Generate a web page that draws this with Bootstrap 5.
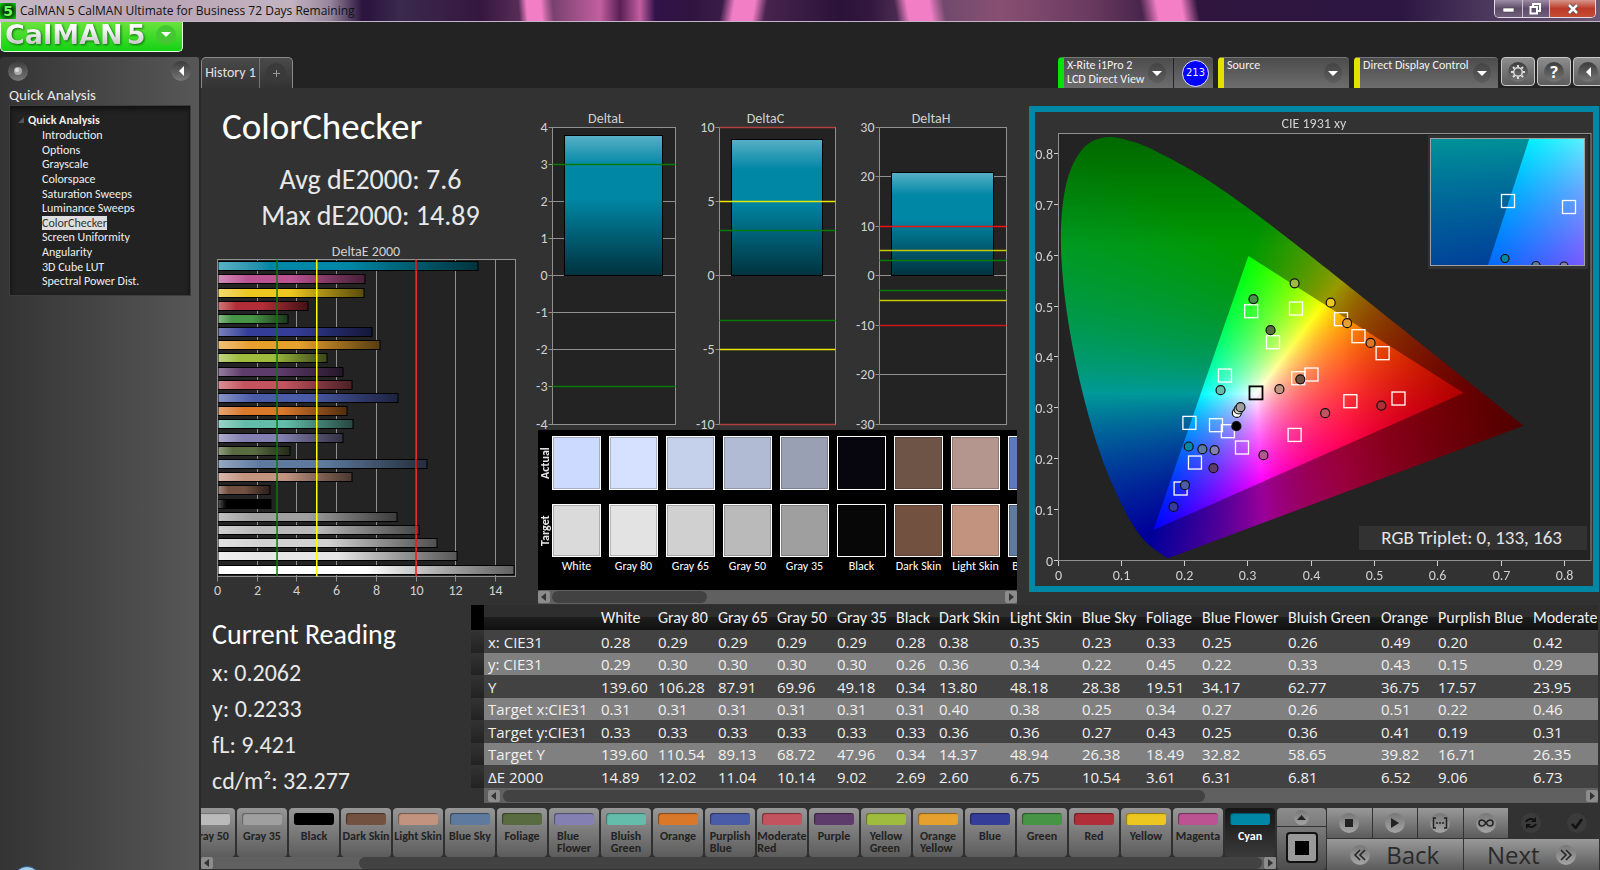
<!DOCTYPE html>
<html lang="en" data-bs-theme="dark">
<head>
<meta charset="utf-8">
<meta name="viewport" content="width=device-width, initial-scale=1">
<title>CalMAN 5 CalMAN Ultimate for Business 72 Days Remaining</title>
<link href="https://cdn.jsdelivr.net/npm/bootstrap@5.3.0/dist/css/bootstrap.min.css" rel="stylesheet">
<style>
  :root { --ui: Carlito, Lato, sans-serif; --num: "Open Sans", "Noto Sans", sans-serif; --cyan: #0087a5; }
  body { font-family: var(--ui); font-size: 13px; line-height: 14px; color: #e8e8e8; background: #232323; overflow-x: hidden; }
  button { font-family: inherit; }
  svg { display: block; }

  /* window frame */
  .titlebar { height: 22px; color: #111; border-bottom: 1px solid #c4b4c8; font: 12px/20px var(--num); overflow: hidden;
    background:
      linear-gradient(90deg, #c8bac6 0, #b9a3b4 150px, #c3b4c0 290px, #b3a2b4cc 330px, transparent 362px),
      linear-gradient(80deg, transparent 1126px, #f57fc6 1142px 1166px, transparent 1182px),
      linear-gradient(100deg, transparent 712px, #f27fc6 724px 744px, transparent 756px),
      linear-gradient(80deg, transparent 884px, #f27fc6 896px 918px, transparent 932px),
      linear-gradient(85deg, transparent 518px, #f27fc6 526px 540px, transparent 552px),
      linear-gradient(90deg, #2c1640 0, #2c1640 370px, #3b2a4d 400px, #35163f 480px, #6d3c67 545px, #c25f9f 600px, #5a1f55 620px, #c25f9f 640px, #32124a 655px, #2f1440 690px, #4a2550 760px, #2a1238 840px, #33173f 870px, #70496c 940px, #885072 1000px, #6a3a60 1090px, #30163e 1180px, #2c1642 1400px, #49365a 1480px, #6a5874 1600px); }
  .app-mark { width: 16px; height: 16px; background: radial-gradient(#0a3a08 40%, #11e011); color: #6dff5a; font: bold 14px/16px "DejaVu Sans", sans-serif; text-align: center; }
  .win-ctl { border: 1px solid #e2dce6; border-top: 0; border-radius: 0 0 5px 5px; height: 18px; overflow: hidden; }
  .win-ctl button { border: 0; height: 17px; width: 27px; background: linear-gradient(#9c8da4, #5e4c69 50%, #6f5f7b); }
  .win-ctl button + button { border-left: 1px solid #cbc2d0; }
  .win-ctl .win-close { width: 46px; background: linear-gradient(#d6968c, #bb3b28 50%, #c64c34); }

  .logo-btn { width: 183px; height: 30px; border: 1px solid #e6ffe0; border-top: 0; border-radius: 0 0 5px 5px; background: linear-gradient(#6be33c, #13d213); padding: 0 6px 4px 4px; }
  .logo-word { font: bold 27px/26px "DejaVu Sans", sans-serif; background: linear-gradient(#fff 20%, #c9c9c9 85%); -webkit-background-clip: text; background-clip: text; color: transparent; filter: drop-shadow(1px 1px 1px #0b6a0b); }
  .logo-drop { width: 20px; height: 20px; border-radius: 50%; background: #45c732; }

  /* workspace */
  .round-btn { width: 20px; height: 20px; border-radius: 50%; border: 0; padding: 0; background: linear-gradient(#3c3c3c, #777); display: flex; align-items: center; justify-content: center; }
  .side { width: 201px; flex: none; background: linear-gradient(90deg, #343434, #575757); border-right: 2px solid #2a2a2a; border-radius: 4px 4px 0 0; overflow: hidden; position: relative; }
  .side-title { font-size: 15px; line-height: 18px; padding: 5px 0 1px 9px; }
  .tree { background: #222; border: 1px solid #3c3c3c; box-shadow: inset 0 3px 5px #111; margin: 0 8px 0 9px; padding: 7px 0 4px; height: 191px; }
  .tree ul { height: 161px; display: grid; grid-auto-rows: 1fr; margin: 1px 0 0; padding: 0 0 0 32px; list-style: none; }
  .tree a { color: #eee; text-decoration: none; font-size: 12px; }
  .tree a.current { background: #dedede; color: #333; }
  .orb { position: absolute; left: 14px; bottom: -20px; width: 26px; height: 24px; border-radius: 50%; background: #a8cbe8; border: 1px solid #2b5c86; }

  .tab-box { height: 31px; border: 1px solid #8a8a8a; border-bottom: 0; border-radius: 5px 5px 0 0; background: linear-gradient(#4a4a4a, #333); }
  .tab-box > button { background: none; border: 0; color: #e0e0e0; padding: 0; font-size: 14px; white-space: nowrap; }
  .meter { height: 31px; color: #f2f2f2; background: linear-gradient(#4c4c4c, #6d6d6d); border-top: 1px solid #777; border-radius: 4px 4px 0 0; overflow: hidden; display: flex; align-items: stretch; border-left: 6px solid #e6e000; }
  .meter.ready { border-left-color: #07e207; }
  .meter button { flex: 1; background: none; border: 0; color: inherit; text-align: left; padding: 0 7px 0 3px; display: flex; justify-content: space-between; }
  .meter button > span:first-child { white-space: nowrap; font-size: 12px; }
  .drop { width: 18px; height: 20px; margin-top: 5px; border-radius: 50%; background: linear-gradient(#444, #5d5d5d); display: flex; align-items: center; justify-content: center; flex: none; }
  .count-chip { width: 27px; height: 27px; border-radius: 50%; background: #00f; border: 1px solid #dfe6ff; font: 10px/24px "DejaVu Sans", sans-serif; text-align: center; }
  .tool-btn { width: 34px; height: 29px; border: 1px solid #c9c9c9; border-radius: 4px; background: linear-gradient(#8d8d8d, #5c5c5c); padding: 0; display: flex; align-items: center; justify-content: center; flex: none; }

  .board { background: #323232; }
  .big-title { font-size: 37px; line-height: 46px; padding: 16px 0 0 21px; font-weight: 400; margin: 0; }
  .stat { font-size: 28px; line-height: 36px; padding: 12px 0 6px 6px; }
  .col-stats { width: 333px; flex: none; }
  .col-delta { width: 487px; flex: none; padding-top: 20px; }
  .cie { border: 6px solid var(--cyan); margin: 18px 1px 0 8px; position: relative; }
  .cie canvas { position: absolute; inset: 0; width: 100%; height: 100%; }
  .cie svg { position: relative; width: 100%; height: auto; }
  svg text { font-family: var(--ui); fill: #d0d0d0; }

  .swatches { background: #000; height: 160px; margin: 0 4px; padding-top: 6px; overflow: hidden; display: grid; grid-template-columns: 14px 1fr; }
  .swatches .lane { display: flex; gap: 8px; overflow: hidden; }
  .swatches figure { margin: 0; width: 49px; flex: none; text-align: center; color: #fff; font-size: 12px; }
  .chip { height: 54px; border: 1px solid #fff; box-shadow: inset 0 0 0 1px #0003; margin-bottom: 14px; }
  .chip + .chip { height: 53px; margin-bottom: 2px; }
  .swatches figcaption { white-space: nowrap; margin: 0 -4px; }
  .vert { writing-mode: vertical-rl; transform: rotate(180deg); font-weight: 700; font-size: 12px; height: 54px; margin-bottom: 14px; text-align: center; width: 14px; }

  .sbar { height: 14px; background: #606060; display: flex; align-items: center; }
  .sbar button { width: 12px; height: 12px; padding: 0; border: 0; border-radius: 2px; background: #8c8c8c; display: flex; align-items: center; justify-content: center; flex: none; }
  .sbar i { height: 12px; border-radius: 6px; background: #424242; flex: none; }

  .reading { width: 270px; flex: none; padding: 12px 0 0 11px; font-size: 24px; line-height: 36px; }
  .reading h2 { font-size: 28px; line-height: 36px; margin: 0 0 2px; font-weight: 400; }
  .grid-wrap { overflow: hidden; margin-right: 2px; min-width: 0; flex: 1; }
  .readings { table-layout: fixed; border-collapse: collapse; width: 1178px; font: 15px/22px var(--num); color: #f0f0f0; }
  .readings th, .readings td { padding: 0 0 0 4px; white-space: nowrap; font-weight: 400; text-align: left; overflow: hidden; }
  .readings thead tr { height: 25px; background: linear-gradient(#2e2e2e 50%, #1c1c1c 50%, #111); font-family: var(--ui); font-size: 16px; }
  .readings thead th:first-child { background: #000; }
  .readings tbody tr { height: 23px; background: #424242; }
  .readings tbody tr:nth-child(even) { background: #808080; height: 22px; }
  .readings tbody th:first-child { background: linear-gradient(#333, #222); }

  .patches { display: flex; justify-content: flex-end; gap: 2px; height: 49px; overflow: hidden; padding-right: 1px; background: #303030; }
  .patch { width: 50px; flex: none; border: 0; border-radius: 4px; padding: 5px 0 0; background: linear-gradient(#979797, #5c5c5c); color: #222; font-size: 12px; line-height: 12px; font-weight: 700; display: flex; flex-direction: column; align-items: center; gap: 5px; }
  .patch span { height: 12px; width: 40px; border-radius: 3px; box-shadow: inset 1px 1px 1px #0006; flex: none; }
  .patch b { text-align: left; }
  .patch.on { background: linear-gradient(#161616, #3a3a3a); color: #fff; }
  .stopcol { width: 49px; flex: none; border-radius: 4px; overflow: hidden; background: linear-gradient(#8d8d8d, #4c4c4c); display: flex; flex-direction: column; align-items: center; }
  .stopcol .up { width: 100%; height: 19px; border: 0; border-bottom: 1px solid #333; background: none; padding: 0; display: flex; align-items: center; justify-content: center; }
  .stopcol .stop { width: 32px; height: 31px; margin-top: 5px; border: 2px solid #111; border-radius: 4px; background: #999; padding: 0; display: flex; align-items: center; justify-content: center; }
  .pad { width: 272px; flex: none; display: grid; grid-template-columns: repeat(6, 1fr); grid-template-rows: 30px 31px; column-gap: 1px; row-gap: 1px; margin-right: 1px; }
  .pad button { border: 0; padding: 0; background: linear-gradient(#999, #5b5b5b); color: #2a2a2a; display: flex; align-items: center; justify-content: center; }
  .pad .off { background: #323232; }
  .pad .nav-step { grid-column: span 3; font: 24px/28px var(--num); gap: 16px; -webkit-text-stroke: 0; }
  .disc { width: 20px; height: 20px; border-radius: 50%; background: linear-gradient(#777, #a5a5a5); display: flex; align-items: center; justify-content: center; flex: none; }
  .off .disc { background: #3b3b3b; }
</style>
</head>
<body>
<div class="d-flex flex-column min-vh-100">
  <header class="titlebar d-flex justify-content-between">
    <div class="d-flex align-items-center gap-1"><span class="app-mark">5</span><span>CalMAN 5 CalMAN Ultimate for Business 72 Days Remaining</span></div>
    <div class="win-ctl d-flex me-1">
      <button aria-label="Minimize"><svg width="12" height="12" class="mx-auto"><rect x="0" y="5" width="11" height="4" fill="#fff" stroke="#444" stroke-width=".6"/></svg></button>
      <button aria-label="Restore"><svg width="12" height="12" viewBox="0 0 12 12"><path d="M4 3V1h7v7H9M1.500 4h6.500v6.500H1.500z" fill="none" stroke="#fff" stroke-width="2"/></svg></button>
      <button class="win-close" aria-label="Close"><svg width="12" height="12" viewBox="0 0 12 12" class="mx-auto"><path d="M2 2l8 8M10 2l-8 8" stroke="#444" stroke-width="4"/><path d="M2 2l8 8M10 2l-8 8" stroke="#fff" stroke-width="2.600"/></svg></button>
    </div>
  </header>

  <div style="height:35px">
    <button class="logo-btn d-flex align-items-center justify-content-between" aria-label="CalMAN 5 menu">
      <span class="logo-word">CalMAN<span class="ms-1">5</span></span>
      <span class="logo-drop d-flex align-items-center justify-content-center"><svg width="10" height="5"><path d="M0 0h10L5 5z" fill="#fff"/></svg></span>
    </button>
  </div>

  <div class="d-flex flex-grow-1">
    <aside class="side">
      <div class="d-flex justify-content-between px-2 pt-1">
        <button class="round-btn" aria-label="Record"><svg width="10" height="10"><circle cx="5" cy="5" r="4" fill="#aaa"/><circle cx="4" cy="4" r="2" fill="#ddd"/></svg></button>
        <button class="round-btn" aria-label="Collapse"><svg width="6" height="10"><path d="M6 0v10L1 5z" fill="#fff"/></svg></button>
      </div>
      <div class="side-title">Quick Analysis</div>
      <nav class="tree">
        <div class="d-flex align-items-center ps-2 gap-1"><svg width="6" height="6" ><path d="M6 0v6H0z" fill="#555"/></svg><a href="#" class="fw-bold">Quick Analysis</a></div>
        <ul id="tree"></ul>
      </nav>
      <div class="orb"></div>
    </aside>

    <main class="flex-grow-1 d-flex flex-column" style="min-width:0">
      <div class="d-flex justify-content-between overflow-hidden">
        <div class="tab-box d-flex">
          <button style="width:57px">History 1</button>
          <button class="border-start border-secondary d-flex align-items-center justify-content-center" style="width:33px" aria-label="Add tab"><span class="round-btn" style="background:#3a3a3a"><svg width="7" height="7"><path d="M3.500 0v7M0 3.500h7" stroke="#999"/></svg></span></button>
        </div>
        <div class="d-flex" style="margin-right:-7px">
          <div class="meter ready" style="width:155px;margin-right:5px">
            <button><span>X-Rite i1Pro 2<br>LCD Direct View</span><span class="drop"><svg width="10" height="5"><path d="M0 0h10L5 5z" fill="#fff"/></svg></span></button>
            <div class="border-start border-dark d-flex align-items-center px-1 ps-2"><span class="count-chip">213</span></div>
          </div>
          <div class="meter" style="width:131px;margin-right:5px"><button><span>Source</span><span class="drop"><svg width="10" height="5"><path d="M0 0h10L5 5z" fill="#fff"/></svg></span></button></div>
          <div class="meter" style="width:144px;margin-right:3px"><button><span>Direct Display Control</span><span class="drop"><svg width="10" height="5"><path d="M0 0h10L5 5z" fill="#fff"/></svg></span></button></div>
          <div class="d-flex" style="gap:2px">
            <button class="tool-btn" aria-label="Settings"><span class="round-btn"><svg width="16" height="16" viewBox="-8 -8 16 16"><circle r="4.300" fill="none" stroke="#ddd" stroke-width="1.500"/><g stroke="#ddd" stroke-width="2"><path d="M0-7v2M0 5v2M-7 0h2M5 0h2M-5-5l1.500 1.500M5 5L3.500 3.500M5-5L3.500-3.500M-5 5l1.500-1.500"/></g></svg></span></button>
            <button class="tool-btn" aria-label="Help"><span class="round-btn text-white fw-bold fs-6" style="font-family:'Open Sans'">?</span></button>
            <button class="tool-btn pe-1" aria-label="Collapse toolbar"><span class="round-btn"><svg width="6" height="10"><path d="M6 0v10L1 5z" fill="#fff"/></svg></span></button>
          </div>
        </div>
      </div>

      <div class="board flex-grow-1 d-flex flex-column">
        <div class="d-flex" style="height:517px">
          <section class="col-stats">
            <h1 class="big-title">ColorChecker</h1>
            <div class="stat text-center">Avg dE2000: 7.6<br>Max dE2000: 14.89</div>
            <svg id="de" width="333" height="360"></svg>
          </section>
          <section class="col-delta">
            <div class="d-flex" id="deltas"></div>
            <div class="swatches">
              <div><div class="vert">Actual</div><div class="vert">Target</div></div>
              <div class="lane" id="lane"></div>
            </div>
            <div class="sbar mx-1"><button aria-label="Left"><svg width="6" height="8"><path d="M5 0v8L0 4z" fill="#333"/></svg></button><i style="width:155px;margin-left:2px"></i><button class="ms-auto" aria-label="Right"><svg width="6" height="8"><path d="M1 0v8l5-4z" fill="#333"/></svg></button></div>
          </section>
          <section class="flex-grow-1" style="min-width:0"><div class="cie"><canvas id="field" width="558" height="474"></canvas><svg id="cie" viewBox="0 0 558 474"></svg></div></section>
        </div>

        <div class="d-flex">
          <section class="reading">
            <h2>Current Reading</h2>
            <div>x: 0.2062</div><div>y: 0.2233</div><div>fL: 9.421</div><div>cd/m²: 32.277</div>
          </section>
          <div class="grid-wrap">
            <table class="readings"><colgroup id="cols"></colgroup><thead id="thead"></thead><tbody id="tbody"></tbody></table>
            <div class="sbar" style="height:15px;margin-left:13px"><button class="ms-1" aria-label="Left"><svg width="6" height="8"><path d="M5 0v8L0 4z" fill="#333"/></svg></button><i style="width:63%;margin-left:3px"></i><button class="ms-auto" aria-label="Right"><svg width="6" height="8"><path d="M1 0v8l5-4z" fill="#333"/></svg></button></div>
          </div>
        </div>

        <footer class="d-flex mt-auto" style="height:62px;gap:1px">
          <div class="flex-grow-1" style="min-width:0">
            <div class="patches" id="patches"></div>
            <div class="sbar" style="height:12px"><button class="ms-0" aria-label="Left"><svg width="6" height="8"><path d="M5 0v8L0 4z" fill="#333"/></svg></button><i class="ms-auto" style="width:84%;margin-right:2px"></i><button aria-label="Right"><svg width="6" height="8"><path d="M1 0v8l5-4z" fill="#333"/></svg></button></div>
          </div>
          <div class="stopcol">
            <button class="up" aria-label="Expand"><span class="disc" style="width:15px;height:15px"><svg width="9" height="5"><path d="M0 5h9L4.500 0z" fill="#222"/></svg></span></button>
            <button class="stop" aria-label="Stop all"><svg width="14" height="14"><rect width="14" height="14"/></svg></button>
          </div>
          <div class="pad">
            <button aria-label="Stop"><span class="disc"><svg width="8" height="8"><rect width="8" height="8" fill="#222"/></svg></span></button>
            <button aria-label="Play"><span class="disc"><svg width="9" height="10"><path d="M1 0l8 5-8 5z" fill="#222"/></svg></span></button>
            <button aria-label="Series"><span class="disc"><svg width="16" height="12" viewBox="0 0 16 12"><path d="M4 1H1.500v10H4M12 1h2.500v10H12" fill="none" stroke="#222" stroke-width="1.500"/><path d="M4 6h8" stroke="#222" stroke-width="1.600" stroke-dasharray="2 1"/></svg></span></button>
            <button aria-label="Continuous"><span class="disc"><svg width="16" height="8" viewBox="0 0 16 8"><path d="M8 4C6 1 5 1 4 1a3 3 0 000 6c1 0 2 0 4-3s3-3 4-3a3 3 0 010 6c-1 0-2 0-4-3z" fill="none" stroke="#222" stroke-width="1.500"/></svg></span></button>
            <button class="off" aria-label="Refresh"><span class="disc"><svg width="14" height="14" viewBox="0 0 14 14"><path d="M2 6a5 4 0 018-2M12 8a5 4 0 01-8 2" fill="none" stroke="#111" stroke-width="2"/><path d="M12 1v5H7zM2 13V8h5z" fill="#111"/></svg></span></button>
            <button class="off" aria-label="Accept"><span class="disc"><svg width="12" height="11" viewBox="0 0 12 11"><path d="M1 6l3.500 4L11 1" fill="none" stroke="#111" stroke-width="2.600"/></svg></span></button>
            <button class="nav-step"><span class="disc"><svg width="12" height="12"><path d="M6 1L1 6l5 5M11 1L6 6l5 5" fill="none" stroke="#222" stroke-width="1.500"/></svg></span>Back</button>
            <button class="nav-step">Next<span class="disc"><svg width="12" height="12"><path d="M1 1l5 5-5 5M6 1l5 5-5 5" fill="none" stroke="#222" stroke-width="1.500"/></svg></span></button>
          </div>
        </footer>
      </div>
    </main>
  </div>
</div>

<script src="https://cdn.jsdelivr.net/npm/bootstrap@5.3.0/dist/js/bootstrap.bundle.min.js"></script>
<script>
const $ = id => document.getElementById(id);
const line = (x1, y1, x2, y2, c, w = 1) => `<line x1="${x1}" y1="${y1}" x2="${x2}" y2="${y2}" stroke="${c}" stroke-width="${w}"/>`;
const label = (x, y, t, a = 'middle', s = 14) => `<text x="${x}" y="${y}" text-anchor="${a}" font-size="${s}">${t}</text>`;

$('tree').innerHTML = ['Introduction', 'Options', 'Grayscale', 'Colorspace', 'Saturation Sweeps', 'Luminance Sweeps', 'ColorChecker', 'Screen Uniformity', 'Angularity', '3D Cube LUT', 'Spectral Power Dist.']
  .map(t => `<li><a href="#"${t === 'ColorChecker' ? ' class="current"' : ''}>${t}</a></li>`).join('');

// Patches in measuring order: name, colour, dE 2000
const patches = [['White', '#ffffff', 14.89], ['Gray 80', '#e6e6e6', 12.02], ['Gray 65', '#d2d2d2', 11.04], ['Gray 50', '#bababa', 10.14], ['Gray 35', '#9f9f9f', 9.02], ['Black', '#000000', 2.69], ['Dark Skin', '#735141', 2.6], ['Light Skin', '#c2937f', 6.75], ['Blue Sky', '#5e7b9f', 10.54], ['Foliage', '#596c41', 3.61], ['Blue Flower', '#8480b1', 6.31], ['Bluish Green', '#63bdaa', 6.81], ['Orange', '#d97829', 6.52], ['Purplish Blue', '#4a5ba8', 9.06], ['Moderate Red', '#c2535f', 6.73], ['Purple', '#5d3b6b', 6.31], ['Yellow Green', '#9fbc3f', 5.5], ['Orange Yellow', '#e6a02d', 8.15], ['Blue', '#343d97', 7.78], ['Green', '#479446', 3.55], ['Red', '#b12e38', 4.55], ['Yellow', '#ecc71f', 7.37], ['Magenta', '#bb5393', 7.42], ['Cyan', '#0087a5', 13.1]];

$('patches').innerHTML = patches.slice(3).map(([n, c]) => `<button class="patch${n === 'Cyan' ? ' on' : ''}"><span style="background:${c}"></span><b>${/ (Flower|Green|Blue|Red|Yellow)$/.test(n) ? n.replace(' ', '<br>') : n}</b></button>`).join('');

// DeltaE 2000 bars
(() => {
  const x0 = 16.5, y0 = 19.5, w = 298, h = 317, k = 19.85;
  let s = '<defs>', b = '';
  patches.forEach(([n, c], i) => s += `<linearGradient id="g${i}"><stop offset="0" stop-color="color-mix(in srgb, ${c} 65%, #fff)"/><stop offset=".2" stop-color="${c}"/><stop offset=".5" stop-color="${c}"/><stop offset="1" stop-color="color-mix(in srgb, ${c} 38%, #000)"/></linearGradient>`);
  s += `</defs>` + label(165, 16, 'DeltaE 2000') + `<rect x="${x0}" y="${y0}" width="${w}" height="${h}" fill="#232323" stroke="#909090"/>`;
  for (let v = 0; v <= 14; v += 2) {
    const x = Math.floor(x0 + v * k) + .5;
    s += line(x, y0, x, y0 + h + 5, '#909090') + label(x, 355, v);
  }
  patches.forEach(([n, c, v], i) => {
    const y = Math.round(329.5 - i * 13.19 - 5);
    b += `<rect x="${x0 + .5}" y="${y + .5}" width="${Math.round(v * k)}" height="9" fill="url(#g${i})" stroke="#000"/>`;
  });
  [[3, '#0a7a0a'], [5, '#ffff00'], [10, '#ff1010']].forEach(([v, c]) => b += line(x0 + v * k, y0, x0 + v * k, y0 + h, c, 1.5));
  $('de').innerHTML = s + b + line(x0, y0, x0, y0 + h, '#909090');
})();

// Delta L / C / H columns
const G = '#087a08', Y = '#e8e800', R = '#f01010';
$('deltas').innerHTML = [
  { t: 'DeltaL', W: 156, x: 18.5, w: 123, off: 8, max: 4, step: 1, v: 3.77, lim: [[3, G], [-3, G]] },
  { t: 'DeltaC', W: 160, x: 29.5, w: 116, off: 12, max: 10, step: 5, v: 9.13, lim: [[10, '#b04040'], [5, Y], [3, G], [-3, G], [-5, Y], [-10, '#b04040']] },
  { t: 'DeltaH', W: 171, x: 29.5, w: 127, off: 12, max: 30, step: 10, v: 20.8, lim: [[10, R], [5, '#c8c800'], [3, G], [-3, G], [-5, '#c8c800'], [-10, '#c81818']] }
].map(o => {
  const top = 19.5, h = 297, py = v => Math.round(top + (o.max - v) / (2 * o.max) * h) - .5;
  let s = `<svg width="${o.W}" height="322"><defs><linearGradient id="v${o.t}" x2="0" y2="1"><stop offset="0" stop-color="#58b0c6"/><stop offset=".22" stop-color="#0087a5"/><stop offset=".45" stop-color="#0087a5"/><stop offset="1" stop-color="#00323e"/></linearGradient></defs>`;
  s += label(o.x + o.w / 2 - o.off, 15, o.t) + `<rect x="${o.x}" y="${top}" width="${o.w}" height="${h}" fill="#232323" stroke="#909090"/>`;
  for (let v = -o.max; v <= o.max; v += o.step) s += line(o.x - 4, py(v), o.x + o.w, py(v), '#909090') + label(o.x - 5, py(v) + 4, v, 'end');
  s += `<rect x="${o.x + 12}" y="${py(o.v)}" width="${o.w - 25}" height="${py(0) - py(o.v)}" fill="url(#v${o.t})" stroke="#000"/>`;
  o.lim.forEach(([v, c]) => s += line(o.x, py(v), o.x + o.w, py(v), c, 1.5));
  return s + '</svg>';
}).join('');

// Actual / target swatches
$('lane').innerHTML = [['White', '#cddaff', '#dadada'], ['Gray 80', '#d6e0ff', '#e3e3e3'], ['Gray 65', '#c5d0ea', '#d0d0d0'], ['Gray 50', '#b1bbd4', '#bababa'], ['Gray 35', '#99a0b3', '#9f9f9f'], ['Black', '#07050d', '#070707'], ['Dark Skin', '#6e5447', '#735141'], ['Light Skin', '#b4968e', '#c2937f'], ['Blue Sky', '#5f79c0', '#5e7b9d']]
  .map(([n, a, t]) => `<figure><div class="chip" style="background:${a}"></div><div class="chip" style="background:${t}"></div><figcaption>${n}</figcaption></figure>`).join('');

// Readings table
const widths = [13, 113, 57, 60, 59, 60, 59, 43, 71, 72, 64, 56, 86, 93, 57, 95, 120];
$('cols').innerHTML = widths.map(w => `<col style="width:${w}px">`).join('');
$('thead').innerHTML = '<tr><th></th><th></th>' + patches.slice(0, 15).map(p => `<th>${p[0]}</th>`).join('') + '</tr>';
$('tbody').innerHTML = `x: CIE31|0.28 0.29 0.29 0.29 0.29 0.28 0.38 0.35 0.23 0.33 0.25 0.26 0.49 0.20 0.42
y: CIE31|0.29 0.30 0.30 0.30 0.30 0.26 0.36 0.34 0.22 0.45 0.22 0.33 0.43 0.15 0.29
Y|139.60 106.28 87.91 69.96 49.18 0.34 13.80 48.18 28.38 19.51 34.17 62.77 36.75 17.57 23.95
Target x:CIE31|0.31 0.31 0.31 0.31 0.31 0.31 0.40 0.38 0.25 0.34 0.27 0.26 0.51 0.22 0.46
Target y:CIE31|0.33 0.33 0.33 0.33 0.33 0.33 0.36 0.36 0.27 0.43 0.25 0.36 0.41 0.19 0.31
Target Y|139.60 110.54 89.13 68.72 47.96 0.34 14.37 48.94 26.38 18.49 32.82 58.65 39.82 16.71 26.35
ΔE 2000|14.89 12.02 11.04 10.14 9.02 2.69 2.60 6.75 10.54 3.61 6.31 6.81 6.52 9.06 6.73`
  .split('\n').map(r => { const [h, v] = r.split('|'); return `<tr><th></th><th>${h}</th>${v.split(' ').map(c => `<td>${c}</td>`).join('')}</tr>`; }).join('');

// CIE 1931 xy diagram
(() => {
  const X = x => 23.5 + x * 633, Yy = y => 448.5 - y * 507.6;
  const locus = [[.1741, .005], [.1714, .0051], [.1689, .0069], [.1644, .0109], [.1566, .0177], [.144, .0297], [.1355, .0399], [.1241, .0578], [.1096, .0868], [.0913, .1327], [.0687, .2007], [.0454, .295], [.0235, .4127], [.0082, .5384], [.0039, .6548], [.0139, .7502], [.0389, .812], [.0743, .8338], [.1142, .8262], [.1547, .8059], [.2296, .7543], [.3016, .6923], [.3731, .6245], [.4441, .5547], [.5125, .4866], [.5752, .4242], [.627, .3725], [.6658, .334], [.6915, .3083], [.7347, .2653]];
  const tri = [[.64, .33], [.3, .6], [.15, .06]];
  // linear sRGB, scaled to its strongest channel; dimmed outside the gamut
  const rgb = (x, y, dim) => {
    y = Math.max(y, .002);
    const A = x / y, C = (1 - x - y) / y;
    const c = [3.2406 * A - 1.5372 - .4986 * C, -.9689 * A + 1.8758 + .0415 * C, .0557 * A - .204 + 1.057 * C].map(v => Math.max(v, 0));
    const m = Math.max(...c);
    const k = (dim ? 153 : 255) * (x > .45 ? 1 - (x - .45) * 1.7 : 1) * (y > .62 ? 1 - (y - .62) * 1.5 : 1);
    return c.map(v => k * v / m);
  };
  const layer = (w, h, inv, dim) => {
    const cv = document.createElement('canvas'); cv.width = w; cv.height = h;
    const g = cv.getContext('2d'), im = g.createImageData(w, h);
    for (let j = 0, p = 0; j < h; j++) for (let i = 0; i < w; i++, p += 4) {
      const c = rgb(...inv(i + .5, j + .5), dim);
      im.data[p] = c[0]; im.data[p + 1] = c[1]; im.data[p + 2] = c[2]; im.data[p + 3] = 255;
    }
    g.putImageData(im, 0, 0); return cv;
  };
  const ctx = $('field').getContext('2d');
  const trace = (pts, fx, fy) => { ctx.beginPath(); pts.forEach(([x, y], i) => ctx[i ? 'lineTo' : 'moveTo'](fx(x), fy(y))); ctx.closePath(); };
  const smooth = pts => {
    const q = [];
    for (let i = 0; i < pts.length - 1; i++) {
      const a = pts[Math.max(i - 1, 0)], b = pts[i], c = pts[i + 1], d = pts[Math.min(i + 2, pts.length - 1)];
      for (let t = 0; t < 1; t += .125) q.push([0, 1].map(n => .5 * (2 * b[n] + (c[n] - a[n]) * t + (2 * a[n] - 5 * b[n] + 4 * c[n] - d[n]) * t * t + (3 * b[n] - a[n] - 3 * c[n] + d[n]) * t ** 3)));
    }
    q.push(pts[pts.length - 1]); return q;
  };
  ctx.fillStyle = '#232323'; ctx.fillRect(23, 21, 533, 428);
  const inv = (i, j) => [(i - 23.5) / 633, (448.5 - j) / 507.6];
  for (const [pts, dim] of [[smooth(locus), 1], [tri, 0]]) {
    ctx.save(); trace(pts, X, Yy); ctx.clip(); ctx.drawImage(layer(558, 474, inv, dim), 0, 0); ctx.restore();
  }
  // magnified inset around the current patch
  const ix = 395, iy = 26, iw = 155, ih = 128;
  const IX = x => 473 + (x - .208) * 1452, IY = y => 89 - (y - .2711) * 1236;
  const iinv = (i, j) => [(i + ix - 473) / 1452 + .208, .2711 - (j + iy - 89) / 1236];
  ctx.fillStyle = '#323232'; ctx.fillRect(ix - 2, iy - 3, iw + 5, ih + 6);
  ctx.drawImage(layer(iw, ih, iinv, 1), ix, iy);
  ctx.save(); ctx.beginPath(); ctx.rect(ix, iy, iw, ih); ctx.clip(); trace(tri, IX, IY); ctx.clip(); ctx.drawImage(layer(iw, ih, iinv, 0), ix, iy); ctx.restore();

  let s = label(279, 16, 'CIE 1931 xy') + `<rect x="23.500" y="21.500" width="532.500" height="427" fill="none" stroke="#909090"/>`;
  for (let n = 0; n <= 8; n++) {
    const x = Math.round(X(n / 10)) - .5, y = Math.round(Yy(n / 10)) - .5, t = n ? '0.' + n : '0';
    s += line(x, 449, x, 454, '#d0d0d0') + label(x, 468, t) + line(19, y, 23, y, '#d0d0d0') + label(18, y + 5, t, 'end');
  }
  const sq = [[.3044, .4911], [.3752, .4964], [.4463, .4754], [.4739, .4419], [.512, .4084], [.3389, .43], [.263, .3644], [.3787, .3591], [.3997, .3664], [.4611, .3138], [.5371, .3191], [.373, .2474], [.2068, .2711], [.2676, .2547], [.2488, .2666], [.2899, .2226], [.2156, .193], [.1929, .1418]];
  const box = (x, y, c, w) => `<rect x="${x - 6.5}" y="${y - 6.5}" width="13" height="13" fill="none" stroke="${c}" stroke-width="${w}"/>`;
  sq.forEach(([x, y]) => s += box(X(x), Yy(y), '#fff', 1.3));
  s += box(X(.312), Yy(.3302), '#000', 1.8);
  [[.373, .546, '#9fbc3f'], [.308, .515, '#479446'], [.43, .508, '#ecc71f'], [.456, .4675, '#e6a02d'], [.335, .4537, '#596c41'], [.493, .4287, '#d97829'], [.256, .3355, '#63bdaa'], [.349, .3375, '#c2937f'], [.382, .357, '#735141'], [.2817, .2908, '#fff'], [.2845, .2975, '#ccc'], [.2875, .302, '#9f9f9f'], [.281, .2646, '#000'], [.2057, .2246, '#0087a5'], [.2273, .2193, '#5e7b9f'], [.2466, .2173, '#8480b1'], [.2448, .1818, '#5d3b6b'], [.1998, .1483, '#4a5ba8'], [.1817, .1056, '#343d97'], [.3237, .2075, '#bb5393'], [.4213, .2902, '#c2535f'], [.51, .3053, '#b12e38']]
    .forEach(([x, y, c]) => s += `<circle cx="${X(x)}" cy="${Yy(y)}" r="4.500" fill="${c}" stroke="#111" stroke-width="1.200"/>`);
  s += `<clipPath id="ic"><rect x="${ix}" y="${iy}" width="${iw}" height="${ih}"/></clipPath><g clip-path="url(#ic)">` + box(473, 89, '#fff', 1.3) + box(534, 95, '#fff', 1.3);
  [[470, 146.5, '#0087a5'], [501, 153.5, '#5e7b9f'], [529, 154, '#8480b1']].forEach(([x, y, c]) => s += `<circle cx="${x}" cy="${y}" r="4" fill="${c}" stroke="#111" stroke-width="1.200"/>`);
  s += `</g><rect x="${ix + .5}" y="${iy + .5}" width="${iw - 1}" height="${ih - 1}" fill="none" stroke="#a0a0a0"/>`;
  s += `<rect x="324" y="414" width="228" height="24" fill="#323232"/><text x="527" y="432" text-anchor="end" font-size="19" style="fill:#e4e4e4">RGB Triplet: 0, 133, 163</text>`;
  $('cie').innerHTML = s;
})();
</script>
</body>
</html>
